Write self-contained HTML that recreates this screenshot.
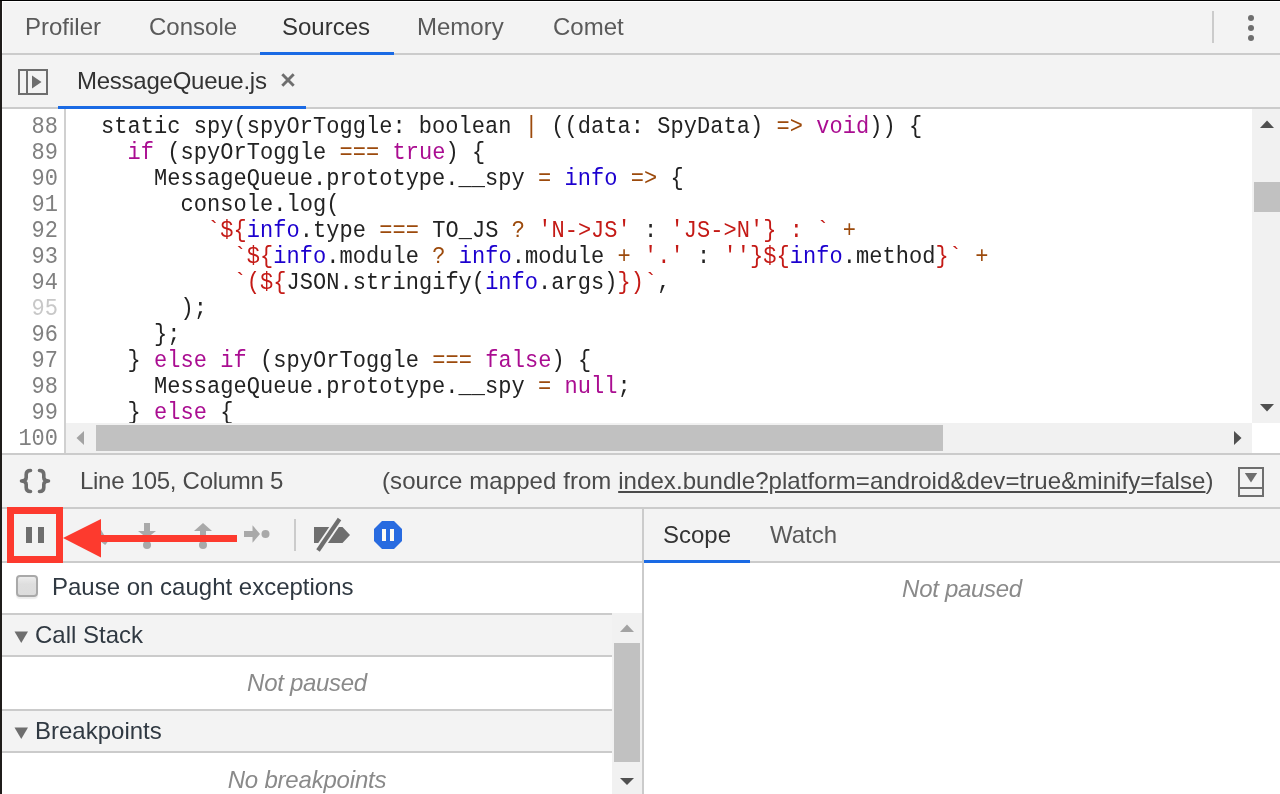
<!DOCTYPE html>
<html><head><meta charset="utf-8">
<style>
*{margin:0;padding:0;box-sizing:border-box}
html,body{width:1280px;height:794px;overflow:hidden;background:#f3f3f3;-webkit-font-smoothing:antialiased;font-family:"Liberation Sans",sans-serif;font-size:24px;color:#333}
.a{position:absolute}
.t{position:absolute;white-space:pre;line-height:24px;font-size:24px}
.hl{position:absolute;background:#cbcbcb}
.code{position:absolute;font-family:"Liberation Mono",monospace;font-size:22px;line-height:26px;white-space:pre;color:#222;letter-spacing:0.043px}
.k{color:#aa0d91}.o{color:#9c4a0c}.s{color:#c41a16}.v{color:#1c00cf}
.cl{position:absolute;left:74.5px;height:26px;font-family:"Liberation Mono",monospace;font-size:22px;line-height:26px;white-space:pre;color:#222;letter-spacing:0.043px;transform:scaleY(1.08);transform-origin:0 19px}
.ln{position:absolute;font-family:"Liberation Mono",monospace;font-size:22px;line-height:26px;white-space:pre;color:#808080;text-align:right;width:58px;left:0;height:26px;transform:scaleY(1.08);transform-origin:0 19px}
</style></head><body><div id="root" style="position:absolute;left:0;top:0;width:1280px;height:794px;will-change:transform">
<!-- left dark edge -->
<div class="a" style="left:0;top:0;width:2px;height:794px;background:#1f1c1a;z-index:10"></div>
<div class="a" style="left:0;top:0;width:1280px;height:1px;background:#000;z-index:10"></div>
<div class="a" style="left:2px;top:1px;width:1278px;height:1px;background:#fff"></div>
<div class="a" style="left:2px;top:1px;width:1px;height:52px;background:#fff"></div>

<!-- top tabs -->
<div class="t" style="left:25px;top:15px;color:#5a5a5a">Profiler</div>
<div class="t" style="left:149px;top:15px;color:#5a5a5a">Console</div>
<div class="t" style="left:282px;top:15px;color:#333">Sources</div>
<div class="t" style="left:417px;top:15px;color:#5a5a5a">Memory</div>
<div class="t" style="left:553px;top:15px;color:#5a5a5a">Comet</div>
<div class="hl" style="left:2px;top:53px;width:1278px;height:2px"></div>
<div class="a" style="left:260px;top:52px;width:134px;height:3px;background:#1a6ae4"></div>
<div class="a" style="left:1212px;top:11px;width:2px;height:32px;background:#cbcbcb"></div>
<div class="a" style="left:1248px;top:15px;width:6px;height:6px;border-radius:3px;background:#6e6e6e"></div>
<div class="a" style="left:1248px;top:25px;width:6px;height:6px;border-radius:3px;background:#6e6e6e"></div>
<div class="a" style="left:1248px;top:35px;width:6px;height:6px;border-radius:3px;background:#6e6e6e"></div>

<!-- file tab bar -->
<svg class="a" style="left:0;top:55px" width="60" height="50">
 <rect x="19" y="15" width="28" height="24" fill="none" stroke="#6e6e6e" stroke-width="2"/>
 <rect x="26" y="15" width="2" height="24" fill="#6e6e6e"/>
 <path d="M32 20.5 L41.5 27 L32 33.5Z" fill="#6e6e6e"/>
</svg>
<div class="t" style="left:77px;top:69px;color:#333;letter-spacing:-0.25px">MessageQueue.js</div>
<svg class="a" style="left:280px;top:72px" width="16" height="16"><path d="M2.3 2.3 L13.7 13.7 M13.7 2.3 L2.3 13.7" stroke="#6e6e6e" stroke-width="2.9"/></svg>
<div class="hl" style="left:2px;top:107px;width:1278px;height:2px"></div>
<div class="a" style="left:58px;top:106px;width:248px;height:3px;background:#1a6ae4"></div>

<!-- code area -->
<div class="a" style="left:2px;top:109px;width:1250px;height:344px;background:#fff"></div>
<div class="a" style="left:64px;top:109px;width:2px;height:344px;background:#d0d0d0"></div>
<div class="ln" style="top:115px">88</div>
<div class="ln" style="top:141px">89</div>
<div class="ln" style="top:167px">90</div>
<div class="ln" style="top:193px">91</div>
<div class="ln" style="top:219px">92</div>
<div class="ln" style="top:245px">93</div>
<div class="ln" style="top:271px">94</div>
<div class="ln" style="top:297px"><span style="color:#c8c8c8">95</span></div>
<div class="ln" style="top:323px">96</div>
<div class="ln" style="top:349px">97</div>
<div class="ln" style="top:375px">98</div>
<div class="ln" style="top:401px">99</div>
<div class="ln" style="top:427px">100</div>
<div class="cl" style="top:115px">  static spy(spyOrToggle: boolean <span class="o">|</span> ((data: SpyData) <span class="o">=&gt;</span> <span class="k">void</span>)) {</div>
<div class="cl" style="top:141px">    <span class="k">if</span> (spyOrToggle <span class="o">===</span> <span class="k">true</span>) {</div>
<div class="cl" style="top:167px">      MessageQueue.prototype.__spy <span class="o">=</span> <span class="v">info</span> <span class="o">=&gt;</span> {</div>
<div class="cl" style="top:193px">        console.log(</div>
<div class="cl" style="top:219px">          <span class="s">`${</span><span class="v">info</span>.type <span class="o">===</span> TO_JS <span class="o">?</span> <span class="s">'N-&gt;JS'</span> : <span class="s">'JS-&gt;N'</span><span class="s">} : `</span> <span class="o">+</span></div>
<div class="cl" style="top:245px">            <span class="s">`${</span><span class="v">info</span>.module <span class="o">?</span> <span class="v">info</span>.module <span class="o">+</span> <span class="s">'.'</span> : <span class="s">''</span><span class="s">}${</span><span class="v">info</span>.method<span class="s">}`</span> <span class="o">+</span></div>
<div class="cl" style="top:271px">            <span class="s">`(${</span>JSON.stringify(<span class="v">info</span>.args)<span class="s">})`</span>,</div>
<div class="cl" style="top:297px">        );</div>
<div class="cl" style="top:323px">      };</div>
<div class="cl" style="top:349px">    } <span class="k">else</span> <span class="k">if</span> (spyOrToggle <span class="o">===</span> <span class="k">false</span>) {</div>
<div class="cl" style="top:375px">      MessageQueue.prototype.__spy <span class="o">=</span> <span class="k">null</span>;</div>
<div class="cl" style="top:401px">    } <span class="k">else</span> {</div>

<!-- v scrollbar -->
<div class="a" style="left:1252px;top:109px;width:28px;height:314px;background:#f1f1f1"></div>
<svg class="a" style="left:1252px;top:109px" width="28" height="314">
 <path d="M8 19 L15 11.5 L22 19Z" fill="#505050"/>
 <rect x="2" y="73" width="26" height="30" fill="#c1c1c1"/>
 <path d="M8 295 L22 295 L15 302.5Z" fill="#505050"/>
</svg>
<!-- h scrollbar -->
<div class="a" style="left:66px;top:423px;width:1186px;height:30px;background:#f1f1f1"></div>
<svg class="a" style="left:66px;top:423px" width="1186" height="30">
 <path d="M10.5 15 L18 8 L18 22Z" fill="#a3a3a3"/>
 <rect x="30" y="2" width="847" height="26" fill="#c1c1c1"/>
 <path d="M1168 8 L1175.5 15 L1168 22Z" fill="#505050"/>
</svg>
<div class="a" style="left:1252px;top:423px;width:28px;height:30px;background:#fff"></div>
<div class="hl" style="left:2px;top:453px;width:1278px;height:2px"></div>

<!-- status bar -->
<svg class="a" style="left:0;top:455px" width="60" height="52"><g fill="none" stroke="#6e6e6e" stroke-width="3.6" stroke-linecap="round" stroke-linejoin="round">
 <path d="M30.5 15.5 C27.5 15.5 26.2 16.8 26.2 19.5 L26.2 22.5 C26.2 24.6 25 25.8 21.5 26 C25 26.2 26.2 27.4 26.2 29.5 L26.2 32.5 C26.2 35.2 27.5 36.5 30.5 36.5"/>
 <path d="M39.5 15.5 C42.5 15.5 43.8 16.8 43.8 19.5 L43.8 22.5 C43.8 24.6 45 25.8 48.5 26 C45 26.2 43.8 27.4 43.8 29.5 L43.8 32.5 C43.8 35.2 42.5 36.5 39.5 36.5"/></g></svg>
<div class="t" style="left:80px;top:469px;color:#4a4a4a;letter-spacing:-0.28px">Line 105, Column 5</div>
<div class="t" style="left:382px;top:469px;color:#4a4a4a;letter-spacing:0.07px">(source mapped from <span style="text-decoration:underline">index.bundle?platform=android&amp;dev=true&amp;minify=false</span>)</div>
<svg class="a" style="left:1236px;top:465px" width="30" height="34">
 <rect x="3" y="3" width="24" height="28" fill="none" stroke="#6e6e6e" stroke-width="2"/>
 <rect x="3" y="22" width="24" height="2" fill="#6e6e6e"/>
 <path d="M8.8 8 L21.2 8 L15 17.6Z" fill="#6e6e6e"/>
</svg>
<div class="hl" style="left:2px;top:507px;width:1278px;height:2px"></div>

<!-- debugger toolbar -->
<div class="hl" style="left:2px;top:561px;width:640px;height:2px"></div>
<div class="a" style="left:642px;top:509px;width:2px;height:285px;background:#cbcbcb"></div>
<svg class="a" style="left:0;top:507px" width="642" height="56">
 <rect x="26" y="20" width="6" height="16" fill="#6e6e6e"/>
 <rect x="38" y="20" width="6" height="16" fill="#6e6e6e"/>
 <!-- step over (partially hidden) -->
 <path d="M100.5 22 L108 34.5 L105.2 38 L100.5 34.5Z" fill="#a9a9a9"/>
 <!-- step into -->
 <rect x="144" y="16" width="6" height="10" fill="#a9a9a9"/>
 <path d="M138 24 L156 24 L147 31Z" fill="#a9a9a9"/>
 <circle cx="147" cy="38" r="4" fill="#a9a9a9"/>
 <!-- step out -->
 <path d="M194 24 L212 24 L203 16Z" fill="#a9a9a9"/>
 <rect x="200" y="24" width="6" height="10" fill="#a9a9a9"/>
 <circle cx="203" cy="38" r="4" fill="#a9a9a9"/>
 <!-- step -->
 <rect x="244" y="24" width="9" height="6" fill="#a9a9a9"/>
 <path d="M252.5 18.3 L260 27 L252.5 35.8Z" fill="#a9a9a9"/>
 <circle cx="265.5" cy="27" r="4" fill="#a9a9a9"/>
 <!-- separator -->
 <rect x="294" y="12" width="2" height="32" fill="#cbcbcb"/>
 <!-- deactivate breakpoints -->
 <path d="M314 20 L342.5 20 L350 28 L342.5 36 L314 36Z" fill="#6e6e6e"/>
 <path d="M318 43.5 L339.5 12" stroke="#f3f3f3" stroke-width="8"/>
 <path d="M318 43.5 L339.5 12" stroke="#6e6e6e" stroke-width="4.2"/>
 <!-- pause on exceptions -->
 <path d="M382 14 L394 14 L402 22 L402 34 L394 42 L382 42 L374 34 L374 22Z" fill="#286be0"/>
 <rect x="382" y="22" width="4" height="12" fill="#fcfaf4"/>
 <rect x="390" y="22" width="4" height="12" fill="#fcfaf4"/>
 <!-- red annotation -->
 <path d="M10.5 3.5 H59.5 V52.5 H10.5Z" fill="none" stroke="#fd3a2e" stroke-width="7"/>
 <path d="M63 31 L101 12 L101 50.5Z" fill="#fd3a2e"/>
 <rect x="100" y="28" width="137" height="7" fill="#fd3a2e"/>
</svg>

<!-- right panel tabs -->
<div class="t" style="left:663px;top:523px;color:#333">Scope</div>
<div class="t" style="left:770px;top:523px;color:#5a5a5a">Watch</div>
<div class="hl" style="left:644px;top:561px;width:636px;height:2px"></div>
<div class="a" style="left:644px;top:560px;width:106px;height:3px;background:#1a6ae4"></div>
<div class="a" style="left:644px;top:563px;width:636px;height:231px;background:#fff"></div>
<div class="t" style="left:644px;width:636px;text-align:center;top:577px;color:#8a8a8a;font-style:italic;letter-spacing:-0.3px">Not paused</div>

<!-- left panel -->
<div class="a" style="left:2px;top:563px;width:640px;height:231px;background:#fff"></div>
<div class="a" style="left:16px;top:575px;width:22px;height:22px;border:2px solid #a9a9a9;border-radius:4px;background:linear-gradient(#ececec,#dedede 40%,#dcdcdc);box-shadow:0 1.5px 1px rgba(0,0,0,.08)"></div>
<div class="t" style="left:52px;top:575px;color:#303942">Pause on caught exceptions</div>
<div class="hl" style="left:2px;top:613px;width:610px;height:2px"></div>
<div class="a" style="left:2px;top:615px;width:610px;height:40px;background:#f3f3f3"></div>
<div class="hl" style="left:2px;top:655px;width:610px;height:2px"></div>
<svg class="a" style="left:0;top:615px" width="40" height="40"><path d="M14.5 16.5 L28 16.5 L21.25 28Z" fill="#6e6e6e"/></svg>
<div class="t" style="left:35px;top:623px;color:#303942">Call Stack</div>
<div class="t" style="left:2px;width:610px;text-align:center;top:671px;color:#8a8a8a;font-style:italic;letter-spacing:-0.3px">Not paused</div>
<div class="hl" style="left:2px;top:709px;width:610px;height:2px"></div>
<div class="a" style="left:2px;top:711px;width:610px;height:40px;background:#f3f3f3"></div>
<div class="hl" style="left:2px;top:751px;width:610px;height:2px"></div>
<svg class="a" style="left:0;top:711px" width="40" height="40"><path d="M14.5 16.5 L28 16.5 L21.25 28Z" fill="#6e6e6e"/></svg>
<div class="t" style="left:35px;top:719px;color:#303942">Breakpoints</div>
<div class="t" style="left:2px;width:610px;text-align:center;top:768px;color:#8a8a8a;font-style:italic;letter-spacing:-0.2px">No breakpoints</div>
<!-- left scrollbar -->
<div class="a" style="left:612px;top:613px;width:30px;height:181px;background:#f1f1f1"></div>
<svg class="a" style="left:612px;top:613px" width="30" height="181">
 <path d="M8 19 L15 11.5 L22 19Z" fill="#a3a3a3"/>
 <rect x="2" y="30" width="26" height="119" fill="#c1c1c1"/>
 <path d="M8 165 L22 165 L15 172Z" fill="#505050"/>
</svg>
</div></body></html>
